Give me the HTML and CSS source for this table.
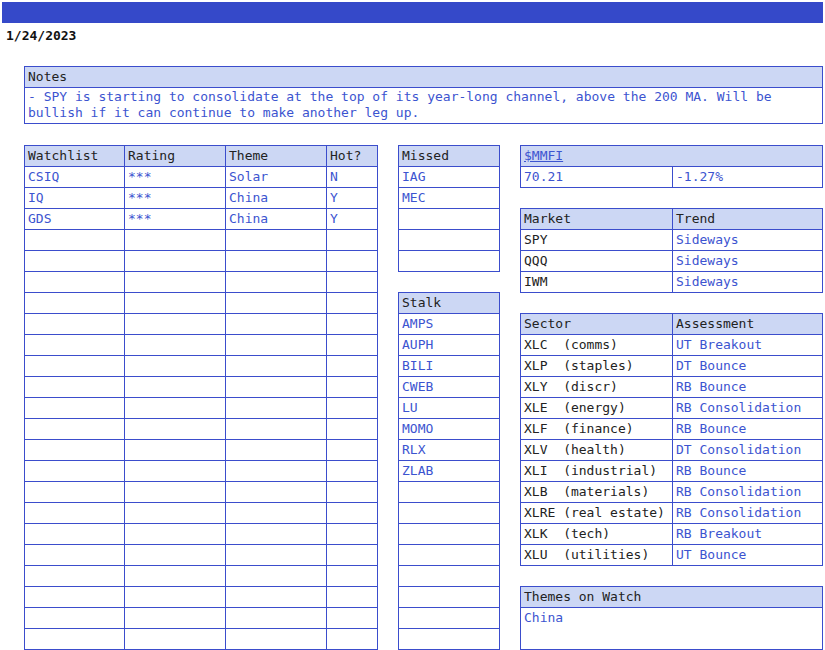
FILE: index.html
```html
<!DOCTYPE html>
<html>
<head>
<meta charset="utf-8">
<link rel="stylesheet" href="styles.css">
</head>
<body>
<div class="topbar"></div>
<div class="date">1/24/2023</div>

<div class="notes">
  <div class="notes-head">Notes</div>
  <div class="notes-body">- SPY is starting to consolidate at the top of its year-long channel, above the 200 MA. Will be bullish if it can continue to make another leg up.</div>
</div>

<div class="main">
  <div class="sheet watch">
    <div class="c h">Watchlist</div><div class="c h">Rating</div><div class="c h">Theme</div><div class="c h">Hot?</div>
    <div class="c">CSIQ</div><div class="c">***</div><div class="c">Solar</div><div class="c">N</div>
    <div class="c">IQ</div><div class="c">***</div><div class="c">China</div><div class="c">Y</div>
    <div class="c">GDS</div><div class="c">***</div><div class="c">China</div><div class="c">Y</div>
    <div class="c"></div><div class="c"></div><div class="c"></div><div class="c"></div>
    <div class="c"></div><div class="c"></div><div class="c"></div><div class="c"></div>
    <div class="c"></div><div class="c"></div><div class="c"></div><div class="c"></div>
    <div class="c"></div><div class="c"></div><div class="c"></div><div class="c"></div>
    <div class="c"></div><div class="c"></div><div class="c"></div><div class="c"></div>
    <div class="c"></div><div class="c"></div><div class="c"></div><div class="c"></div>
    <div class="c"></div><div class="c"></div><div class="c"></div><div class="c"></div>
    <div class="c"></div><div class="c"></div><div class="c"></div><div class="c"></div>
    <div class="c"></div><div class="c"></div><div class="c"></div><div class="c"></div>
    <div class="c"></div><div class="c"></div><div class="c"></div><div class="c"></div>
    <div class="c"></div><div class="c"></div><div class="c"></div><div class="c"></div>
    <div class="c"></div><div class="c"></div><div class="c"></div><div class="c"></div>
    <div class="c"></div><div class="c"></div><div class="c"></div><div class="c"></div>
    <div class="c"></div><div class="c"></div><div class="c"></div><div class="c"></div>
    <div class="c"></div><div class="c"></div><div class="c"></div><div class="c"></div>
    <div class="c"></div><div class="c"></div><div class="c"></div><div class="c"></div>
    <div class="c"></div><div class="c"></div><div class="c"></div><div class="c"></div>
    <div class="c"></div><div class="c"></div><div class="c"></div><div class="c"></div>
    <div class="c"></div><div class="c"></div><div class="c"></div><div class="c"></div>
    <div class="c"></div><div class="c"></div><div class="c"></div><div class="c"></div>
  </div>

  <div class="col">
    <div class="sheet single">
      <div class="c h">Missed</div>
      <div class="c">IAG</div>
      <div class="c">MEC</div>
      <div class="c"></div>
      <div class="c"></div>
      <div class="c"></div>
    </div>
    <div class="sheet single">
      <div class="c h">Stalk</div>
      <div class="c">AMPS</div>
      <div class="c">AUPH</div>
      <div class="c">BILI</div>
      <div class="c">CWEB</div>
      <div class="c">LU</div>
      <div class="c">MOMO</div>
      <div class="c">RLX</div>
      <div class="c">ZLAB</div>
      <div class="c"></div>
      <div class="c"></div>
      <div class="c"></div>
      <div class="c"></div>
      <div class="c"></div>
      <div class="c"></div>
      <div class="c"></div>
      <div class="c"></div>
    </div>
  </div>

  <div class="col">
    <div class="sheet pair">
      <div class="c h span"><a class="link" href="#">$MMFI</a></div>
      <div class="c">70.21</div><div class="c">-1.27%</div>
    </div>
    <div class="sheet pair">
      <div class="c h">Market</div><div class="c h">Trend</div>
      <div class="c k">SPY</div><div class="c">Sideways</div>
      <div class="c k">QQQ</div><div class="c">Sideways</div>
      <div class="c k">IWM</div><div class="c">Sideways</div>
    </div>
    <div class="sheet pair">
      <div class="c h">Sector</div><div class="c h">Assessment</div>
      <div class="c k">XLC  (comms)</div><div class="c">UT Breakout</div>
      <div class="c k">XLP  (staples)</div><div class="c">DT Bounce</div>
      <div class="c k">XLY  (discr)</div><div class="c">RB Bounce</div>
      <div class="c k">XLE  (energy)</div><div class="c">RB Consolidation</div>
      <div class="c k">XLF  (finance)</div><div class="c">RB Bounce</div>
      <div class="c k">XLV  (health)</div><div class="c">DT Consolidation</div>
      <div class="c k">XLI  (industrial)</div><div class="c">RB Bounce</div>
      <div class="c k">XLB  (materials)</div><div class="c">RB Consolidation</div>
      <div class="c k">XLRE (real estate)</div><div class="c">RB Consolidation</div>
      <div class="c k">XLK  (tech)</div><div class="c">RB Breakout</div>
      <div class="c k">XLU  (utilities)</div><div class="c">UT Bounce</div>
    </div>
    <div class="sheet pair">
      <div class="c h span">Themes on Watch</div>
      <div class="c span tall">China</div>
    </div>
  </div>
</div>
</body>
</html>
```

FILE: styles.css
```css
html, body {
  margin: 0;
  padding: 0;
  background: #ffffff;
}
body {
  font-family: "DejaVu Sans Mono", "Liberation Mono", monospace;
  font-size: 13px;
  color: #222222;
  width: 825px;
}
.topbar {
  margin: 2px 0 0 2px;
  width: 821px;
  height: 21px;
  background: #3549c9;
}
.date {
  font-weight: bold;
  color: #111111;
  margin: 4px 0 0 6px;
  line-height: 18px;
  height: 18px;
}
.notes {
  margin: 21px 0 0 24px;
  width: 799px;
  box-sizing: border-box;
  border: 1px solid #3b4dcc;
}
.notes-head {
  background: #ccd7f4;
  height: 21px;
  line-height: 20px;
  box-sizing: border-box;
  border-bottom: 1px solid #3b4dcc;
  padding-left: 3px;
}
.notes-body {
  color: #3c54d0;
  line-height: 16px;
  padding: 1px 3px 3px 3px;
  height: 35px;
  box-sizing: border-box;
}
.main {
  display: flex;
  align-items: flex-start;
  gap: 20px;
  margin: 21px 0 0 24px;
}
.col {
  display: flex;
  flex-direction: column;
  gap: 20px;
}
.sheet {
  display: grid;
  border-top: 1px solid #3b4dcc;
  border-left: 1px solid #3b4dcc;
}
.watch {
  grid-template-columns: 100px 101px 101px 51px;
}
.single {
  grid-template-columns: 101px;
}
.pair {
  grid-template-columns: 152px 150px;
}
.c {
  height: 21px;
  box-sizing: border-box;
  border-right: 1px solid #3b4dcc;
  border-bottom: 1px solid #3b4dcc;
  line-height: 20px;
  padding-left: 3px;
  color: #3c54d0;
  white-space: pre;
  overflow: hidden;
}
.c.h {
  background: #ccd7f4;
  color: #222222;
}
.c.k {
  color: #222222;
}
.span {
  grid-column: 1 / -1;
}
.tall {
  height: 42px;
}
.link {
  color: #3c54d0;
  text-decoration: underline;
}
```
